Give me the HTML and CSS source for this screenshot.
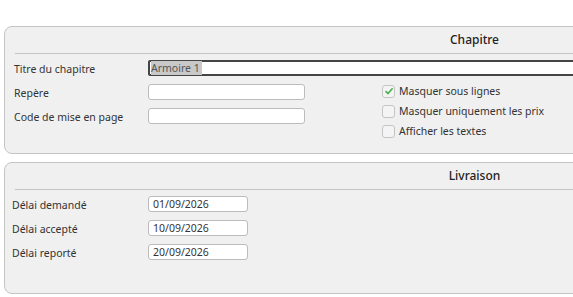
FILE: index.html
```html
<!DOCTYPE html>
<html lang="fr">
<head>
    <meta charset="UTF-8">
    <title>Chapitre</title>
    <link rel="stylesheet" href="styles.css">
</head>
<body>

<div class="panel panel-chapitre">
    <div class="panel-title">Chapitre</div>
    <div class="panel-body">
        <div class="fields">
            <div class="row">
                <label class="label">Titre du chapitre</label>
                <div class="field field-wide field-focus"><span class="selected">Armoire 1</span></div>
            </div>
            <div class="row">
                <label class="label">Repère</label>
                <div class="field"></div>
            </div>
            <div class="row">
                <label class="label">Code de mise en page</label>
                <div class="field"></div>
            </div>
        </div>
        <div class="options">
            <div class="check">
                <span class="box checked">
                    <svg width="10" height="10" viewBox="0 0 10 10"><path d="M1.5 5.2 L4 7.6 L8.6 2.2" fill="none" stroke="#4caf50" stroke-width="1.6"/></svg>
                </span>
                Masquer sous lignes
            </div>
            <div class="check"><span class="box"></span>Masquer uniquement les prix</div>
            <div class="check"><span class="box"></span>Afficher les textes</div>
        </div>
    </div>
</div>

<div class="panel panel-livraison">
    <div class="panel-title">Livraison</div>
    <div class="panel-body">
        <div class="fields">
            <div class="row">
                <label class="label">Délai demandé</label>
                <div class="field field-date">01/09/2026</div>
            </div>
            <div class="row">
                <label class="label">Délai accepté</label>
                <div class="field field-date">10/09/2026</div>
            </div>
            <div class="row">
                <label class="label">Délai reporté</label>
                <div class="field field-date">20/09/2026</div>
            </div>
        </div>
    </div>
</div>

</body>
</html>
```

FILE: styles.css
```css
body {
    margin: 0;
    padding: 26px 0 0 4px;
    background: #fff;
    font-family: "Noto Sans", "Open Sans", sans-serif;
    font-size: 10.5px;
    color: #333;
    overflow: hidden;
}
.panel {
    width: 929px;
    background: #f0f0f0;
    border: 1px solid #c4c4c4;
    border-radius: 8px;
    margin-bottom: 8px;
}
.panel-chapitre {
    height: 126px;
}
.panel-livraison {
    height: 130px;
}
.panel-title {
    margin-left: 10px;
    height: 26px;
    line-height: 26px;
    border-bottom: 1px solid #c4c4c4;
    text-align: center;
    font-size: 12px;
    font-weight: 500;
    color: #222;
}
.panel-body {
    display: flex;
    padding: 6px 0 0 9px;
}
.panel-livraison .panel-body {
    padding-left: 7px;
}
.fields {
    display: flex;
    flex-direction: column;
    gap: 8px;
}
.panel-chapitre .fields {
    flex: 1;
}
.row {
    display: flex;
    align-items: center;
    height: 16px;
}
.label {
    width: 134px;
    padding-top: 2px;
}
.panel-livraison .label {
    width: 136px;
}
.field {
    box-sizing: border-box;
    width: 157px;
    height: 16px;
    background: #fff;
    border: 1px solid #bcbcbc;
    border-radius: 3px;
    line-height: 14px;
    padding-left: 4px;
}
.field-wide {
    flex: 1;
    margin-right: 20px;
}
.field-focus {
    border: 2px solid #444;
    border-radius: 2px;
    padding-left: 1px;
    line-height: 12px;
}
.selected {
    background: #c8c8c8;
    color: #555;
    padding-right: 2px;
}
.field-date {
    width: 100px;
}
.options {
    position: absolute;
    left: 382px;
    top: 81px;
    display: flex;
    flex-direction: column;
}
.check {
    display: flex;
    align-items: center;
    height: 20px;
}
.box {
    box-sizing: border-box;
    width: 13px;
    height: 13px;
    border: 1px solid #c4c4c4;
    border-radius: 3px;
    background: #f4f4f4;
    margin-right: 4px;
    display: flex;
    align-items: center;
    justify-content: center;
}
```
